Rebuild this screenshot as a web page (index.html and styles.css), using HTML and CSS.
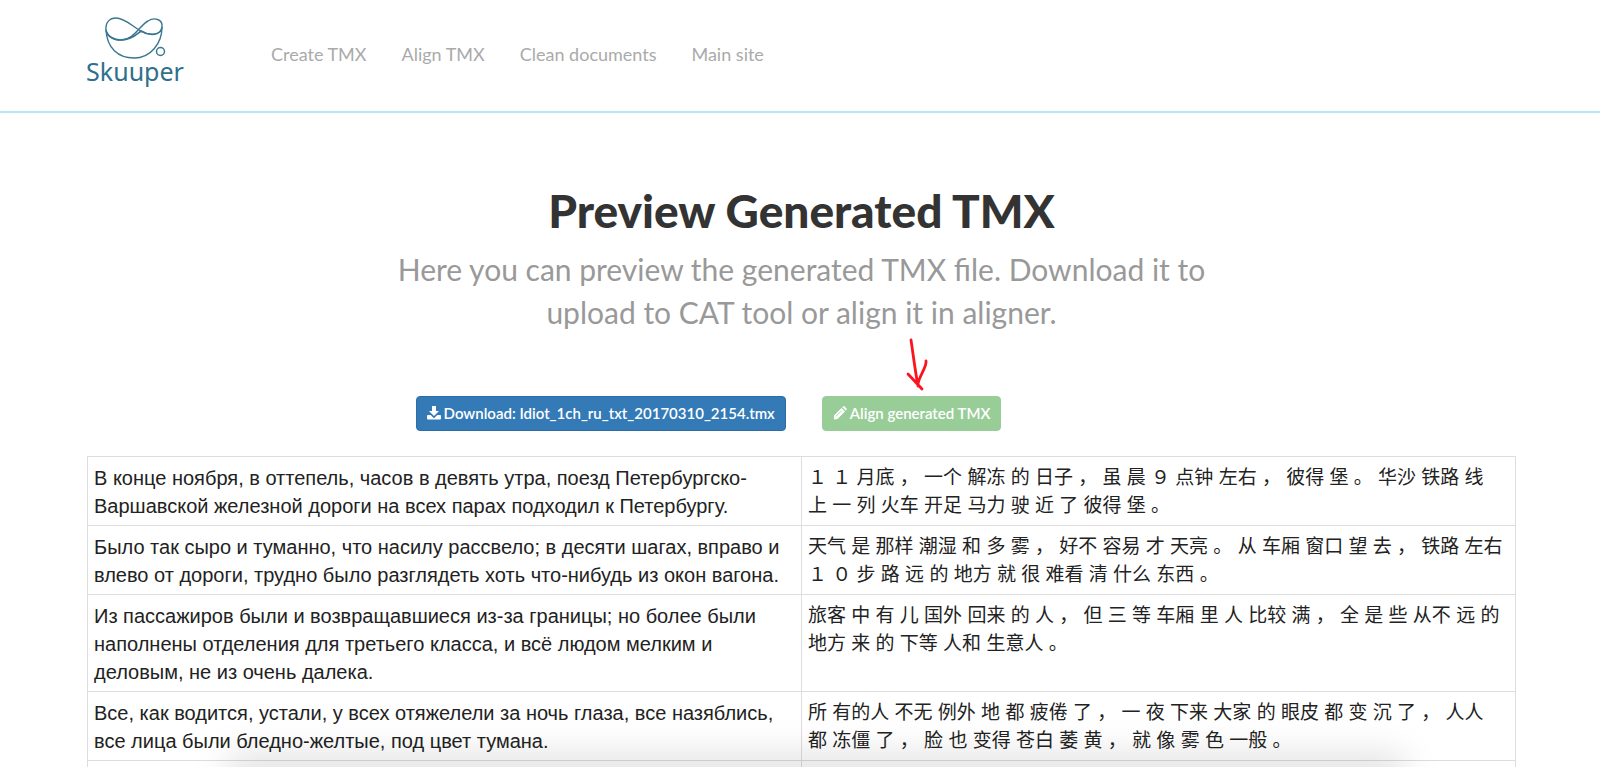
FILE: index.html
```html
<!DOCTYPE html>
<html lang="en">
<head>
<meta charset="utf-8">
<title>Skuuper - Preview Generated TMX</title>
<link rel="stylesheet" href="styles.css">
</head>
<body>
<div class="page">
  <header class="header">
    <div class="container header-inner">
      <a class="logo" href="#">
        <svg class="logo-mark" viewBox="0 0 64 44" fill="none" stroke="#3a7690" aria-hidden="true">
          <path stroke-width="1.400" d="M3 15C2 6 7 2 13 2C22 2 30 11 38 15C46 20 58 20 59 11C60 3 51 1 45 5C37 9 31 24 18 24C10 24 4 20 3 14C4 32 15 42 31 42C48 42 59 27 59 11"/>
          <path stroke-width="1.600" d="M3 14C4 20 10 24 18 24C29 24 34 18 38 15C46 20 58 20 59 11"/>
          <circle cx="57.500" cy="35.500" r="4" stroke-width="1.500"/>
        </svg>
        <span class="logo-text">Skuuper</span>
      </a>
      <nav class="nav">
        <a href="#">Create TMX</a>
        <a href="#">Align TMX</a>
        <a href="#">Clean documents</a>
        <a href="#">Main site</a>
      </nav>
    </div>
  </header>
  <main class="container">
    <section class="intro">
      <h1>Preview Generated TMX</h1>
      <p>Here you can preview the generated TMX file. Download it to upload to CAT tool or align it in aligner.</p>
    </section>
    <div class="actions">
      <button type="button" class="btn btn-primary">
        <svg class="icon" viewBox="0 0 14 14" fill="currentColor" aria-hidden="true"><path d="M5 0h4v5h3L7 10 2 5h3zM1 9h2.600L7 12.200 10.400 9H13q1 0 1 1v2.500q0 1-1 1H1q-1 0-1-1V10q0-1 1-1z"/></svg>
        <span>Download: Idiot_1ch_ru_txt_20170310_2154.tmx</span>
      </button>
      <button type="button" class="btn btn-success">
        <svg class="icon" viewBox="0 0 14 14" fill="currentColor" aria-hidden="true"><path d="M1 9.400 8.500 1.900 12 5.400 4.500 12.900 1 13.400zM9.200 1.200 10 .5q.8-.8 1.600 0L13.400 2.300q.8.800 0 1.600l-.7.700z"/><path d="M3 10.300 8.600 4.700" stroke="#98cd98" stroke-width=".8"/></svg>
        <span>Align generated TMX</span>
        <svg class="arrow" viewBox="0 0 24 54" fill="none" stroke="#fb1420" stroke-width="2.800" stroke-linecap="round" stroke-linejoin="round" aria-hidden="true"><path d="M5 2C7 15 9 32 12 48M2 36L16 51M20 23C21 29 13 38 12 46"/></svg>
      </button>
    </div>
    <table class="segments">
      <tbody>
        <tr>
          <td lang="ru">В конце ноября, в оттепель, часов в девять утра, поезд Петербургско-Варшавской железной дороги на всех парах подходил к Петербургу.</td>
          <td lang="zh-CN">１ １ 月底 ， 一个 解冻 的 日子 ， 虽 晨 ９ 点钟 左右 ， 彼得 堡 。 华沙 铁路 线<br>上 一 列 火车 开足 马力 驶 近 了 彼得 堡 。</td>
        </tr>
        <tr>
          <td lang="ru">Было так сыро и туманно, что насилу рассвело; в десяти шагах, вправо и влево от дороги, трудно было разглядеть хоть что-нибудь из окон вагона.</td>
          <td lang="zh-CN">天气 是 那样 潮湿 和 多 雾 ， 好不 容易 才 天亮 。 从 车厢 窗口 望 去 ， 铁路 左右<br>１ ０ 步 路 远 的 地方 就 很 难看 清 什么 东西 。</td>
        </tr>
        <tr>
          <td lang="ru">Из пассажиров были и возвращавшиеся из-за границы; но более были наполнены отделения для третьего класса, и всё людом мелким и деловым, не из очень далека.</td>
          <td lang="zh-CN">旅客 中 有 儿 国外 回来 的 人 ， 但 三 等 车厢 里 人 比较 满 ， 全 是 些 从不 远 的<br>地方 来 的 下等 人和 生意人 。</td>
        </tr>
        <tr>
          <td lang="ru">Все, как водится, устали, у всех отяжелели за ночь глаза, все назяблись, все лица были бледно-желтые, под цвет тумана.</td>
          <td lang="zh-CN">所 有的人 不无 例外 地 都 疲倦 了 ， 一 夜 下来 大家 的 眼皮 都 变 沉 了 ， 人人<br>都 冻僵 了 ， 脸 也 变得 苍白 萎 黄 ， 就 像 雾 色 一般 。</td>
        </tr>
        <tr class="next"><td></td><td></td></tr>
      </tbody>
    </table>
  </main>
  <div class="shade"></div>
</div>
</body>
</html>
```
FILE: styles.css
```css
* { box-sizing: border-box; }

body {
  margin: 0;
  background: #fff;
  color: #222;
  font-family: Lato, "Liberation Sans", "Noto Sans CJK SC", sans-serif;
}

.page {
  position: relative;
  height: 100vh;
  overflow: hidden;
}

.container {
  max-width: 1432px;
  margin: 0 auto;
  padding-left: 3px;
  width: 90%;
}

.header { border-bottom: 2px solid #b8e4f8; }

.header-inner {
  display: flex;
  align-items: center;
  gap: 88px;
  height: 111px;
}

.logo {
  display: flex;
  flex-direction: column;
  align-items: center;
  width: 96px;
  margin-bottom: 14px;
  color: #2f6f8c;
  text-decoration: none;
}

.logo-mark { width: 64px; height: 44px; }

.logo-text {
  font-family: "Noto Sans", sans-serif;
  font-size: 25px;
  line-height: 22px;
}

.nav { display: flex; gap: 35px; padding-bottom: 3px; }

.nav a {
  color: #aaa;
  font-size: 18px;
  line-height: 24px;
  text-decoration: none;
}

.intro {
  max-width: 820px;
  margin: 0 auto;
  padding-top: 69px;
  text-align: center;
}

h1 {
  margin: 0;
  color: #333;
  font-family: "Lato Black", Lato, sans-serif;
  font-size: 46px;
  font-weight: 900;
  line-height: 58px;
}

.intro p {
  margin: 8px 0 0;
  color: #999;
  font-size: 30px;
  line-height: 43px;
}

.actions {
  display: flex;
  justify-content: center;
  gap: 36px;
  padding: 62px 186px 25px 0;
}

.btn {
  position: relative;
  display: flex;
  align-items: center;
  gap: 3px;
  height: 35px;
  padding: 0 10px 2px;
  border: 1px solid;
  border-radius: 4px;
  color: #fff;
  font: 600 15px/20px Lato, sans-serif;
}

.btn-primary { background: #337ab7; border-color: #2e6da4; }
.btn-success { background: #98cd98; border-color: #98cd98; }

.icon { width: 14px; height: 14px; }

.arrow {
  position: absolute;
  left: 83px;
  bottom: 38px;
  width: 24px;
  height: 54px;
}

.segments {
  width: 100%;
  table-layout: fixed;
  border-collapse: collapse;
  font-size: 20px;
  line-height: 28px;
}

.segments td {
  padding: 7px 6px 5px;
  border: 1px solid #ddd;
  vertical-align: top;
}

.segments td:first-child { font-family: "Liberation Sans", Arial, sans-serif; }
.segments td:last-child { font-family: "Liberation Sans", "Noto Sans CJK SC", sans-serif; font-size: 19px; white-space: nowrap; }
.segments .next td { height: 69px; }

.shade {
  position: absolute;
  left: 14%;
  right: 12%;
  bottom: -24px;
  height: 40px;
  border-radius: 20px;
  background: rgba(0, 0, 0, 0.1);
  filter: blur(16px);
  pointer-events: none;
}
```
